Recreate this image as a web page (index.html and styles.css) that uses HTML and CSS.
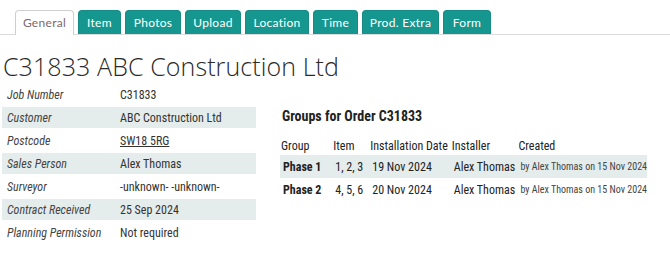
FILE: index.html
```html
<!DOCTYPE html>
<html>
<head>
<meta charset="utf-8">
<link rel="stylesheet" href="styles.css">
</head>
<body>
<div class="tabs">
  <div class="tab active t-general">General</div>
  <div class="tab t-item">Item</div>
  <div class="tab t-photos">Photos</div>
  <div class="tab t-upload">Upload</div>
  <div class="tab t-location">Location</div>
  <div class="tab t-time">Time</div>
  <div class="tab t-prod">Prod. Extra</div>
  <div class="tab t-form">Form</div>
</div>
<h1 class="title">C31833 ABC Construction Ltd</h1>
<div class="content">
  <table class="details">
    <tr><td class="lbl">Job Number</td><td>C31833</td></tr>
    <tr class="alt"><td class="lbl">Customer</td><td>ABC Construction Ltd</td></tr>
    <tr><td class="lbl">Postcode</td><td><span class="link">SW18 5RG</span></td></tr>
    <tr class="alt"><td class="lbl">Sales Person</td><td>Alex Thomas</td></tr>
    <tr><td class="lbl">Surveyor</td><td>-unknown- -unknown-</td></tr>
    <tr class="alt"><td class="lbl">Contract Received</td><td>25 Sep 2024</td></tr>
    <tr><td class="lbl">Planning Permission</td><td>Not required</td></tr>
  </table>
  <div class="groups">
    <h2 class="gtitle">Groups for Order C31833</h2>
    <table class="gtable">
      <tr class="ghead"><th class="c-group">Group</th><th class="c-item">Item</th><th class="c-date">Installation Date</th><th class="c-inst">Installer</th><th class="c-created">Created</th></tr>
      <tr class="alt"><td class="c-group b">Phase 1</td><td class="c-item">1, 2, 3</td><td class="c-date">19 Nov 2024</td><td class="c-inst">Alex Thomas</td><td class="c-created small">by Alex Thomas on 15 Nov 2024</td></tr>
      <tr><td class="c-group b">Phase 2</td><td class="c-item">4, 5, 6</td><td class="c-date">20 Nov 2024</td><td class="c-inst">Alex Thomas</td><td class="c-created small">by Alex Thomas on 15 Nov 2024</td></tr>
    </table>
  </div>
</div>
</body>
</html>
```
FILE: styles.css
```css
body {
  margin: 0;
  padding: 0 0 0 2px;
  background: #fff;
  font-family: "Roboto Condensed", Roboto, sans-serif;
  color: #222;
}
.tabs {
  display: flex;
  gap: 4px;
  padding: 10px 0 0 15px;
  border-bottom: 1px solid #dcdcdc;
  margin-left: -2px;
  height: 24px;
}
.tab {
  height: 24px;
  box-sizing: border-box;
  background: #15978f;
  color: #fff;
  font-family: Lato, sans-serif;
  font-size: 12px;
  letter-spacing: 0.3px;
  line-height: 23px;
  text-align: center;
  border-radius: 4px 4px 0 0;
  border: 1px solid #178c86;
  border-bottom: none;
}
.tab.active {
  background: #fff;
  color: #7a6a6c;
  border: 1px solid #cfcfcf;
  border-bottom: none;
  height: 25px;
}
.t-general { width: 59px; }
.t-item { width: 43px; }
.t-photos { width: 56px; }
.t-upload { width: 56px; }
.t-location { width: 64px; }
.t-time { width: 45px; }
.t-prod { width: 77px; }
.t-form { width: 48px; }
.title {
  margin: 17px 0 0 1px;
  font-family: "Open Sans", sans-serif;
  font-weight: 300;
  font-size: 25px;
  letter-spacing: 0.1px;
  line-height: 28px;
  color: #2a2a2a;
  white-space: nowrap;
}
.content {
  display: flex;
  align-items: flex-start;
  margin-top: 4px;
}
.details {
  border-collapse: separate;
  border-spacing: 0 2px;
  width: 254px;
  font-size: 12px;
  margin-top: -2px;
  white-space: nowrap;
}
.details td {
  height: 21px;
  padding: 0 0 0 5px;
  color: #333;
}
.details td.lbl {
  width: 108px;
  font-style: italic;
  color: #444;
}
.details tr.alt td { background: #e4ecec; }
.link { text-decoration: underline; }
.groups {
  margin-left: 24px;
  margin-top: 24px;
}
.gtitle {
  margin: 0 0 13px 2px;
  font-size: 14px;
  font-weight: bold;
  color: #222;
}
.gtable {
  border-collapse: collapse;
  font-size: 12px;
  width: 367px;
  white-space: nowrap;
}
.gtable th {
  text-align: left;
  font-weight: normal;
  height: 18px;
  padding: 0 0 0 1px;
}
.gtable td {
  height: 23px;
  padding: 0 0 0 3px;
}
.gtable tr.alt td { background: #e4ecec; }
.b { font-weight: bold; }
.small { font-size: 10px; color: #444; }
.c-group { width: 51px; }
.c-item { width: 35px; }
.c-date { width: 79px; }
.c-inst { width: 64px; }
```
